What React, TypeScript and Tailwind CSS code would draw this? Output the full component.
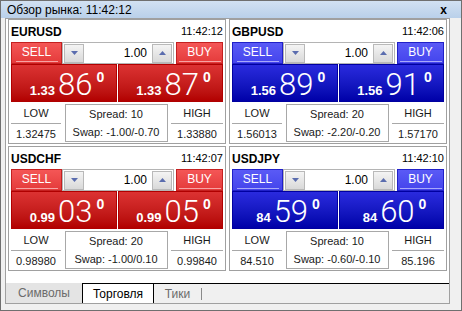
import type { ReactNode } from "react"

type Pair = {
  sym: string
  time: string
  tone: "red" | "blue"
  big: string
  bid: string
  ask: string
  low: string
  high: string
  spread: string
  swap: string
}

const pairs: Pair[] = [
  { sym: "EURUSD", time: "11:42:12", tone: "red", big: "1.33", bid: "86", ask: "87", low: "1.32475", high: "1.33880", spread: "10", swap: "-1.00/-0.70" },
  { sym: "GBPUSD", time: "11:42:06", tone: "blue", big: "1.56", bid: "89", ask: "91", low: "1.56013", high: "1.57170", spread: "20", swap: "-2.20/-0.20" },
  { sym: "USDCHF", time: "11:42:07", tone: "red", big: "0.99", bid: "03", ask: "05", low: "0.98980", high: "0.99840", spread: "20", swap: "-1.00/0.10" },
  { sym: "USDJPY", time: "11:42:10", tone: "blue", big: "84", bid: "59", ask: "60", low: "84.510", high: "85.196", spread: "10", swap: "-0.60/-0.10" },
]

const tone = {
  red: {
    btn: "bg-gradient-to-b from-[#f45656] to-[#e43a3a] border-[#c42020]",
    line: "bg-[#f7a3a3]",
    price: "bg-gradient-to-b from-[#dc3232] to-[#b20000] border-[#b00000]",
  },
  blue: {
    btn: "bg-gradient-to-b from-[#5a5af6] to-[#4444ec] border-[#2020c8]",
    line: "bg-[#a8a8fa]",
    price: "bg-gradient-to-b from-[#2a2ade] to-[#0000a8] border-[#0000a0]",
  },
}

function Arrow({ up }: { up?: boolean }) {
  return (
    <div className="w-[20px] h-[19px] border border-[#b9b9b9] bg-gradient-to-b from-[#f4f4f4] to-[#d9d9d9] flex items-center justify-center">
      <svg width="7" height="4" viewBox="0 0 7 4">
        <path d={up ? "M0 4h7L3.5 0z" : "M0 0h7L3.5 4z"} fill="#5a6cae" />
      </svg>
    </div>
  )
}

function Price({ big, pips, cls }: { big: string; pips: string; cls: string }) {
  return (
    <div className={`h-[38px] border ${cls} flex items-baseline justify-center pl-[6px] pt-[4px] text-white`}>
      <span className="text-[13px] font-bold leading-none">{big}</span>
      <span className="ml-[3px] text-[31px] leading-none font-light font-['Roboto',sans-serif]">{pips}</span>
      <span className="ml-[4px] self-start mt-[1px] text-[14px] font-bold leading-none">0</span>
    </div>
  )
}

function Side({ label, value }: { label: string; value: string }) {
  return (
    <div className="flex flex-col">
      <div className="h-[20px] flex items-center justify-center border-b border-[#a8a8a8]">{label}</div>
      <div className="h-[18px] flex items-center justify-center pt-[3px]">{value}</div>
    </div>
  )
}

function Card({ p }: { p: Pair }) {
  const t = tone[p.tone]
  return (
    <div className="h-[125px] border border-[#a0a0a0] bg-white px-[2px] flex flex-col text-[11px] text-[#1a1a1a]">
      <div className="h-[22px] flex items-center justify-between pt-[1px]">
        <span className="font-bold text-[12px] text-black">{p.sym}</span>
        <span className="text-black">{p.time}</span>
      </div>
      <div className="h-[22px] flex">
        <div className={`w-[51px] border ${t.btn} flex flex-col items-center text-white text-[12px]`}>
          <span className="mt-[2px] leading-[15px]">SELL</span>
          <div className={`mt-auto mb-[1px] h-px w-[42px] ${t.line}`} />
        </div>
        <div className="w-[112px] border border-[#b4b4b4] bg-white flex items-center px-[1px]">
          <Arrow />
          <span className="flex-1 text-right pr-[5px] text-[12px] text-black">1.00</span>
          <Arrow up />
        </div>
        <div className={`ml-[2px] w-[47px] border ${t.btn} flex flex-col items-center text-white text-[12px]`}>
          <span className="mt-[2px] leading-[15px]">BUY</span>
          <div className={`mt-auto mb-[1px] h-px w-[42px] ${t.line}`} />
        </div>
      </div>
      <div className="grid grid-cols-[106px_105px] gap-[1px]">
        <Price big={p.big} pips={p.bid} cls={t.price} />
        <Price big={p.big} pips={p.ask} cls={t.price} />
      </div>
      <div className="mt-[2px] h-[38px] grid grid-cols-[50px_103px_52px] gap-x-[3px] justify-between">
        <Side label="LOW" value={p.low} />
        <div className="border border-[#a8a8a8] flex flex-col items-center justify-center gap-[7px] leading-none">
          <span>Spread: {p.spread}</span>
          <span>Swap: {p.swap}</span>
        </div>
        <Side label="HIGH" value={p.high} />
      </div>
    </div>
  )
}

function Tab({ children, active }: { children: ReactNode; active?: boolean }) {
  return active ? (
    <div className="w-[72px] -mt-px h-[20px] border border-b-0 border-black bg-white flex items-center justify-center text-black">
      {children}
    </div>
  ) : (
    <div className="flex items-center justify-center text-[#6b6b6b]">{children}</div>
  )
}

export default function App() {
  return (
    <div className="w-[462px] h-[311px] bg-[#f0f0f0] border border-[#6f6f6f] flex flex-col font-['Liberation_Sans',Arial,sans-serif]">
      <div className="h-[17px] shrink-0 bg-gradient-to-b from-[#d2e1f2] to-[#b9d0ea] flex items-center justify-between pl-[6px] pr-[14px] text-[12px] text-black">
        <span>Обзор рынка: 11:42:12</span>
        <span className="font-bold text-[12px] leading-none">x</span>
      </div>
      <div className="ml-[4px] mr-[11px] h-[286px] border border-[#a0a0a0] bg-white flex flex-col">
        <div className="px-[2px] grid grid-cols-[218px_218px] gap-x-[3px] gap-y-[2px]">
          {pairs.map((p) => (
            <Card key={p.sym} p={p} />
          ))}
        </div>
        <div className="mt-auto h-[20px] flex text-[12px] bg-[#f0f0f0]">
          <div className="w-[76px] bg-[#e4e4e4] flex items-center justify-center text-[#6b6b6b]">Символы</div>
          <div className="flex-1 flex border-t border-black">
            <Tab active>Торговля</Tab>
            <div className="w-[47px] flex items-center justify-center text-[#6b6b6b]">Тики</div>
            <div className="mt-[4px] h-[12px] w-px bg-[#8a8a8a]" />
          </div>
        </div>
      </div>
    </div>
  )
}
